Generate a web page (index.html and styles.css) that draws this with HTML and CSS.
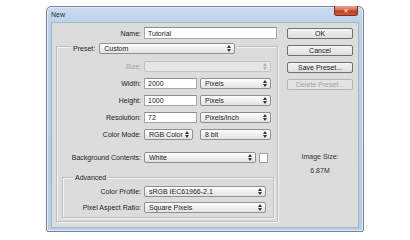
FILE: index.html
```html
<!DOCTYPE html>
<html lang="en">
  <head>
    <meta charset="UTF-8" />
    <title>New</title>
    <link rel="stylesheet" href="styles.css">
  </head>
  <body>
    <div class="window">
      <div class="titlebar">
        <span class="title">New</span>
        <div class="close">&#x2715;</div>
      </div>
      <div class="client">
        <div class="form">
          <div class="row name-row">
            <span class="lbl">Name:</span>
            <div class="input name-input">Tutorial</div>
          </div>

          <div class="group">
            <div class="group-head">
              <span>Preset:</span>
              <div class="select preset">Custom<svg class="arr" width="4" height="7"><polygon points="0,3 2,0 4,3" /><polygon points="0,4 2,7 4,4" /></svg></div>
            </div>

            <div class="row first">
              <span class="lbl disabled">Size:</span>
              <div class="select off w-size"><svg class="arr" width="4" height="7"><polygon points="0,3 2,0 4,3" /><polygon points="0,4 2,7 4,4" /></svg></div>
            </div>
            <div class="row">
              <span class="lbl">Width:</span>
              <div class="input num">2000</div>
              <div class="select unit">Pixels<svg class="arr" width="4" height="7"><polygon points="0,3 2,0 4,3" /><polygon points="0,4 2,7 4,4" /></svg></div>
            </div>
            <div class="row">
              <span class="lbl">Height:</span>
              <div class="input num">1000</div>
              <div class="select unit">Pixels<svg class="arr" width="4" height="7"><polygon points="0,3 2,0 4,3" /><polygon points="0,4 2,7 4,4" /></svg></div>
            </div>
            <div class="row">
              <span class="lbl">Resolution:</span>
              <div class="input num">72</div>
              <div class="select unit">Pixels/Inch<svg class="arr" width="4" height="7"><polygon points="0,3 2,0 4,3" /><polygon points="0,4 2,7 4,4" /></svg></div>
            </div>
            <div class="row">
              <span class="lbl">Color Mode:</span>
              <div class="select mode">RGB Color<svg class="arr" width="4" height="7"><polygon points="0,3 2,0 4,3" /><polygon points="0,4 2,7 4,4" /></svg></div>
              <div class="select unit bits">8 bit<svg class="arr" width="4" height="7"><polygon points="0,3 2,0 4,3" /><polygon points="0,4 2,7 4,4" /></svg></div>
            </div>
            <div class="row bg-row">
              <span class="lbl">Background Contents:</span>
              <div class="select bg">White<svg class="arr" width="4" height="7"><polygon points="0,3 2,0 4,3" /><polygon points="0,4 2,7 4,4" /></svg></div>
              <div class="swatch"></div>
            </div>

            <div class="group advanced">
              <div class="group-head adv-head">
                <span>Advanced</span>
              </div>
              <div class="row first">
                <span class="lbl">Color Profile:</span>
                <div class="select adv">sRGB IEC61966-2.1<svg class="arr" width="4" height="7"><polygon points="0,3 2,0 4,3" /><polygon points="0,4 2,7 4,4" /></svg></div>
              </div>
              <div class="row second">
                <span class="lbl">Pixel Aspect Ratio:</span>
                <div class="select adv">Square Pixels<svg class="arr" width="4" height="7"><polygon points="0,3 2,0 4,3" /><polygon points="0,4 2,7 4,4" /></svg></div>
              </div>
            </div>
          </div>
        </div>

        <div class="side">
          <div class="button">OK</div>
          <div class="button">Cancel</div>
          <div class="button">Save Preset...</div>
          <div class="button disabled">Delete Preset...</div>
          <div class="size-label">Image Size:</div>
          <div class="size-value">6.87M</div>
        </div>
      </div>
    </div>
  </body>
</html>
```

FILE: styles.css
```css
body {
  margin: 0;
  background-color: #fff;
  font-family: "Liberation Sans", Arial, sans-serif;
  font-size: 7px;
  color: #222;
}
.window {
  width: 318px;
  height: 226px;
  box-sizing: border-box;
  margin: 6px 0 0 46px;
  padding: 0 4px 3px 4px;
  border: 1px solid #71849a;
  border-radius: 5px 5px 2px 2px;
  background: linear-gradient(to bottom, #cadcef 0, #bdd1e7 16px, #b8cce2 100%);
  box-shadow: inset 0 0 0 1px #e2ecf6;
  display: flex;
  flex-direction: column;
}
.titlebar {
  height: 15px;
  display: flex;
  justify-content: space-between;
  align-items: flex-start;
}
.title {
  line-height: 15px;
  color: #1b2d3f;
}
.close {
  width: 24px;
  height: 10px;
  margin-top: -1px;
  margin-right: 1px;
  box-sizing: border-box;
  border: 1px solid #7b2e22;
  border-top: none;
  border-radius: 0 0 3px 3px;
  background: linear-gradient(to bottom, #e9a493 0, #d46a55 45%, #c2391f 55%, #d45a3a 100%);
  color: #fff;
  font-family: "DejaVu Sans", sans-serif;
  font-size: 6px;
  line-height: 9px;
  text-align: center;
  font-weight: bold;
}
.client {
  flex: 1;
  background-color: #dcdcdc;
  box-shadow: inset 0 0 0 1px #a3b5c9;
  display: flex;
  gap: 9px;
  padding: 5px 0 0 5px;
}
.form {
  width: 222px;
  display: flex;
  flex-direction: column;
}
.row {
  display: flex;
  align-items: center;
  gap: 3px;
  height: 11px;
  margin-top: 6px;
}
.row.first {
  margin-top: 7px;
}
.lbl {
  width: 84px;
  text-align: right;
  white-space: nowrap;
}
.disabled {
  color: #a2a2a2;
}
.name-row {
  height: 12px;
  margin-top: 0;
}
.name-row .lbl {
  width: 85px;
}
.input {
  height: 100%;
  box-sizing: border-box;
  padding-left: 3px;
  border: 1px solid #a7a7a7;
  border-top-color: #8e8e8e;
  background-color: #fff;
  display: flex;
  align-items: center;
}
.name-input {
  width: 133px;
}
.num {
  width: 53px;
}
.select {
  height: 11px;
  box-sizing: border-box;
  padding: 0 3px 0 4px;
  border: 1px solid #8f8f8f;
  border-radius: 2px;
  background: linear-gradient(to bottom, #fdfdfd, #e3e3e3);
  display: flex;
  align-items: center;
  justify-content: space-between;
  white-space: nowrap;
}
.arr {
  fill: #333;
}
.select.off {
  border-color: #c3c3c3;
  background: #e6e6e6;
}
.select.off .arr {
  fill: #b0b0b0;
  margin-left: auto;
}
.group {
  margin-top: 7px;
  height: 176px;
  box-sizing: border-box;
  border: 1px solid #bfbfbf;
  box-shadow: inset 1px 1px 0 #f4f4f4, 1px 1px 0 #f4f4f4;
  display: flex;
  flex-direction: column;
}
.group-head {
  align-self: flex-start;
  display: flex;
  align-items: center;
  gap: 4px;
  margin: -4px 0 0 14px;
  padding: 0 2px;
  background-color: #dcdcdc;
}
.preset {
  width: 136px;
}
.w-size {
  width: 127px;
}
.unit {
  width: 71px;
}
.mode {
  width: 49px;
}
.bits {
  margin-left: 4px;
}
.bg-row {
  margin-top: 12px;
}
.bg {
  width: 112px;
}
.swatch {
  width: 9px;
  height: 10px;
  box-sizing: border-box;
  border: 1px solid #a0a0a0;
  background-color: #fff;
}
.advanced {
  height: 41px;
  margin: 14px 3px 0 5px;
}
.adv-head {
  height: 10px;
  margin: -6px 0 0 10px;
}
.advanced .lbl {
  width: 78px;
}
.advanced .row.first {
  margin-top: 4px;
}
.advanced .row.second {
  margin-top: 5px;
}
.adv {
  width: 122px;
}
.side {
  width: 66px;
  display: flex;
  flex-direction: column;
  align-items: center;
  padding-top: 1px;
}
.button {
  width: 100%;
  height: 11px;
  box-sizing: border-box;
  margin-bottom: 6px;
  border: 1px solid #707070;
  border-radius: 2px;
  background: linear-gradient(to bottom, #f4f4f4, #dedede);
  display: flex;
  align-items: center;
  justify-content: center;
}
.button.disabled {
  border-color: #b4b4b4;
  background: #e4e4e4;
}
.size-label {
  margin-top: 56px;
  line-height: 10px;
  color: #333;
}
.size-value {
  margin-top: 4px;
  line-height: 10px;
  color: #333;
}
```
